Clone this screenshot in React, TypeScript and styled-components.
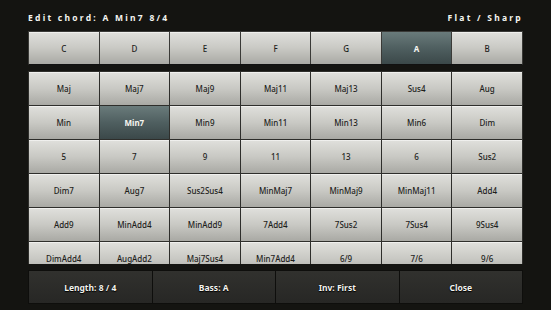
import styled, { createGlobalStyle } from "styled-components";

const GlobalStyle = createGlobalStyle`
  html, body {
    margin: 0;
    padding: 0;
    background: #141411;
  }
  * { box-sizing: border-box; }
`;

const roots = ["C", "D", "E", "F", "G", "A", "B"];

const chords = [
  "Maj", "Maj7", "Maj9", "Maj11", "Maj13", "Sus4", "Aug",
  "Min", "Min7", "Min9", "Min11", "Min13", "Min6", "Dim",
  "5", "7", "9", "11", "13", "6", "Sus2",
  "Dim7", "Aug7", "Sus2Sus4", "MinMaj7", "MinMaj9", "MinMaj11", "Add4",
  "Add9", "MinAdd4", "MinAdd9", "7Add4", "7Sus2", "7Sus4", "9Sus4",
  "DimAdd4", "AugAdd2", "Maj7Sus4", "Min7Add4", "6/9", "7/6", "9/6",
];

const actions = ["Length: 8 / 4", "Bass: A", "Inv: First", "Close"];

export default function App() {
  return (
    <>
      <GlobalStyle />
      <Screen>
        <Header>
          <Title>Edit chord: A Min7 8/4</Title>
          <Title>Flat / Sharp</Title>
        </Header>
        <RootRow>
          {roots.map((r) => (
            <Key key={r} $active={r === "A"}>
              {r}
            </Key>
          ))}
        </RootRow>
        <ChordScroll>
          <ChordGrid>
            {chords.map((c) => (
              <Key key={c} $active={c === "Min7"}>
                {c}
              </Key>
            ))}
          </ChordGrid>
        </ChordScroll>
        <ActionBar>
          {actions.map((a) => (
            <Action key={a}>{a}</Action>
          ))}
        </ActionBar>
      </Screen>
    </>
  );
}

const Screen = styled.div`
  width: 551px;
  height: 310px;
  padding: 0 28px;
  display: flex;
  flex-direction: column;
  background: #141411;
  overflow: hidden;
`;

const Header = styled.div`
  height: 31px;
  padding-top: 3px;
  display: flex;
  align-items: center;
  justify-content: space-between;
`;

const Title = styled.span`
  font-family: "Noto Sans", "Open Sans", sans-serif;
  font-weight: 700;
  font-size: 8.5px;
  letter-spacing: 2.25px;
  color: #f4f4f0;
`;

const RootRow = styled.div`
  height: 34px;
  display: grid;
  grid-template-columns: repeat(7, 1fr);
  gap: 1px;
  background: #3a3a37;
  border: 1px solid #3a3a37;
  border-bottom-color: #111;
`;

const ChordScroll = styled.div`
  margin-top: 6px;
  height: 193px;
  overflow: hidden;
  background: #0c0c0a;
`;

const ChordGrid = styled.div`
  display: grid;
  grid-template-columns: repeat(7, 1fr);
  grid-auto-rows: 33px;
  gap: 1px;
  background: #2e2e2b;
  border: 1px solid #2e2e2b;
`;

const Key = styled.div<{ $active?: boolean }>`
  display: flex;
  align-items: center;
  justify-content: center;
  font-family: "Noto Sans", "Open Sans", sans-serif;
  font-size: 8px;
  font-weight: ${(p) => (p.$active ? 700 : 500)};
  color: ${(p) => (p.$active ? "#f6f6f2" : "#1e1e1c")};
  background: ${(p) =>
    p.$active
      ? "linear-gradient(to bottom, #6a7b7b 0%, #4f5f60 50%, #3b4849 100%)"
      : "linear-gradient(to bottom, #e0e0dc 0%, #c9c9c4 50%, #a9a9a4 100%)"};
  box-shadow: ${(p) =>
    p.$active ? "none" : "inset 0 1px 0 rgba(255,255,255,0.5)"};
`;

const ActionBar = styled.div`
  margin-top: 6px;
  height: 34px;
  display: grid;
  grid-template-columns: repeat(4, 1fr);
  gap: 1px;
  background: #0e0e0c;
  border: 1px solid #0e0e0c;
`;

const Action = styled.div`
  display: flex;
  align-items: center;
  justify-content: center;
  font-family: "Noto Sans", "Open Sans", sans-serif;
  font-size: 8.5px;
  font-weight: 700;
  color: #f2f2ee;
  text-shadow: 0 0 1px #000, 0 1px 1px #000;
  background: linear-gradient(to bottom, #31312e 0%, #272725 100%);
`;
